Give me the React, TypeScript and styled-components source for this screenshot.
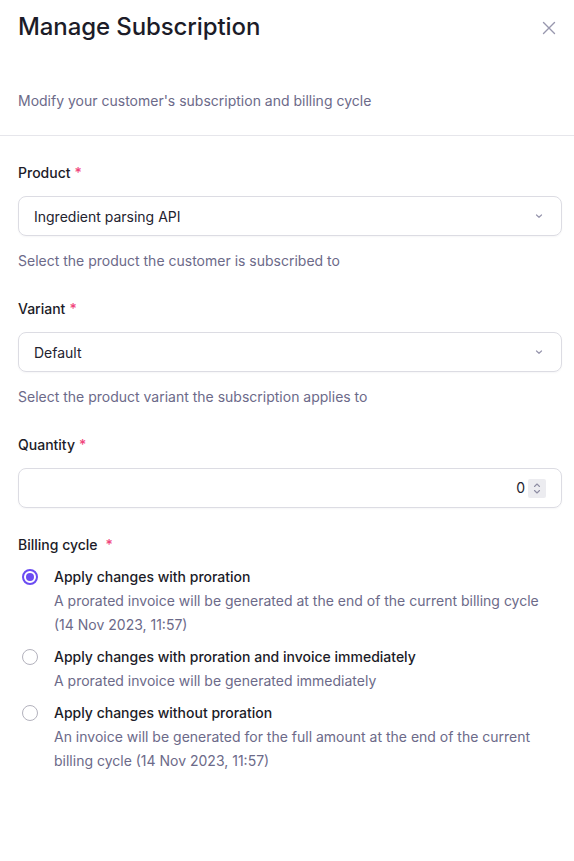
import React, { useState } from "react";
import styled, { createGlobalStyle } from "styled-components";

const Global = createGlobalStyle`
  html, body { margin: 0; padding: 0; background: #ffffff; }
  body { font-family: Inter, "Noto Sans", sans-serif; -webkit-font-smoothing: antialiased; }
  * { box-sizing: border-box; }
`;

const Panel = styled.div`
  width: 574px;
  min-height: 861px;
  background: #fff;
  display: flex;
  flex-direction: column;
`;

const Header = styled.header`
  padding: 12px 12px 24px 18px;
  border-bottom: 1px solid #e6e6eb;
  display: flex;
  flex-direction: column;
`;

const TitleRow = styled.div`
  display: flex;
  align-items: center;
  justify-content: space-between;
  height: 30px;
`;

const Title = styled.h1`
  margin: 0;
  font-size: 24px;
  line-height: 30px;
  font-weight: 500;
  color: #1c1c28;
  letter-spacing: -0.1px;
`;

const CloseButton = styled.button`
  border: 0;
  background: transparent;
  padding: 0;
  margin: 2px 6px 0 0;
  width: 14px;
  height: 14px;
  display: flex;
  align-items: center;
  justify-content: center;
  cursor: pointer;
  color: #9897ae;
`;

const Description = styled.p`
  margin: 49px 0 0 0;
  font-size: 14px;
  line-height: 20px;
  color: #6c6a89;
`;

const Body = styled.div`
  padding: 27px 12px 0 18px;
  display: flex;
  flex-direction: column;
`;

const Field = styled.div<{ $gap?: number }>`
  display: flex;
  flex-direction: column;
  margin-bottom: ${(p) => p.$gap ?? 28}px;
`;

const Label = styled.label`
  font-size: 14px;
  line-height: 20px;
  font-weight: 500;
  color: #1c1c28;
  margin-bottom: 13px;
`;

const Required = styled.span<{ $space?: boolean }>`
  color: #f0457c;
  margin-left: ${(p) => (p.$space ? 8 : 4)}px;
`;

const SelectBox = styled.div`
  height: 40px;
  border: 1px solid #dcdce3;
  border-radius: 8px;
  display: flex;
  align-items: center;
  justify-content: space-between;
  padding: 0 17px 0 15px;
  font-size: 14px;
  color: #23232f;
  box-shadow: 0 1px 2px rgba(20, 20, 40, 0.04);
`;

const Chevron = styled.svg`
  width: 10px;
  height: 10px;
  color: #9897ae;
`;

const Help = styled.div`
  margin-top: 15px;
  font-size: 14px;
  line-height: 20px;
  color: #6c6a89;
`;

const NumberBox = styled.div`
  height: 40px;
  border: 1px solid #dcdce3;
  border-radius: 8px;
  padding: 0 15px 0 16px;
  display: flex;
  align-items: center;
  box-shadow: 0 1px 2px rgba(20, 20, 40, 0.04);
`;

const NumberInput = styled.input`
  flex: 1;
  min-width: 0;
  border: 0;
  padding: 0;
  margin: 0 3px 0 0;
  background: transparent;
  font-family: inherit;
  font-size: 14px;
  line-height: 20px;
  color: #23232f;
  text-align: right;
  outline: none;
  -moz-appearance: textfield;
  &::-webkit-inner-spin-button,
  &::-webkit-outer-spin-button {
    -webkit-appearance: none;
    margin: 0;
  }
`;

const Spinner = styled.div`
  width: 18px;
  height: 19px;
  background: #ececf0;
  border-radius: 2px;
  display: flex;
  align-items: center;
  justify-content: center;
  color: #8e8da3;
`;

const RadioList = styled.div`
  display: flex;
  flex-direction: column;
  gap: 8px;
  margin-top: -3px;
`;

const Option = styled.label`
  display: grid;
  grid-template-columns: 24px 1fr;
  column-gap: 12px;
  cursor: pointer;
`;

const RadioCircle = styled.span<{ $checked: boolean }>`
  width: 16px;
  height: 16px;
  margin: 4px 0 0 4px;
  border-radius: 50%;
  border: ${(p) => (p.$checked ? "2px solid #6b4cf2" : "1.5px solid #b3b2bd")};
  display: flex;
  align-items: center;
  justify-content: center;
  background: #fff;
  &::after {
    content: "";
    display: ${(p) => (p.$checked ? "block" : "none")};
    width: 8px;
    height: 8px;
    border-radius: 50%;
    background: #6b4cf2;
  }
`;

const OptionText = styled.div`
  display: flex;
  flex-direction: column;
`;

const OptionTitle = styled.div`
  font-size: 14px;
  line-height: 24px;
  font-weight: 500;
  color: #1c1c28;
`;

const OptionDesc = styled.div`
  font-size: 14px;
  line-height: 24px;
  color: #6c6a89;
`;

const ChevronIcon = () => (
  <Chevron viewBox="0 0 10 10" fill="none">
    <path d="M2.5 4 L5 6.3 L7.5 4" stroke="currentColor" strokeWidth="1.2" strokeLinecap="round" strokeLinejoin="round" />
  </Chevron>
);

const options = [
  {
    title: "Apply changes with proration",
    desc: "A prorated invoice will be generated at the end of the current billing cycle (14 Nov 2023, 11:57)",
  },
  {
    title: "Apply changes with proration and invoice immediately",
    desc: "A prorated invoice will be generated immediately",
  },
  {
    title: "Apply changes without proration",
    desc: "An invoice will be generated for the full amount at the end of the current billing cycle (14 Nov 2023, 11:57)",
  },
];

export default function App() {
  const [selected, setSelected] = useState(0);
  return (
    <>
      <Global />
      <Panel>
        <Header>
          <TitleRow>
            <Title>Manage Subscription</Title>
            <CloseButton aria-label="Close">
              <svg width="14" height="14" viewBox="0 0 14 14" fill="none">
                <path d="M1.5 1.5 L12.5 12.5 M12.5 1.5 L1.5 12.5" stroke="currentColor" strokeWidth="1.4" strokeLinecap="round" />
              </svg>
            </CloseButton>
          </TitleRow>
          <Description>Modify your customer's subscription and billing cycle</Description>
        </Header>
        <Body>
          <Field>
            <Label>
              Product<Required>*</Required>
            </Label>
            <SelectBox>
              <span>Ingredient parsing API</span>
              <ChevronIcon />
            </SelectBox>
            <Help>Select the product the customer is subscribed to</Help>
          </Field>
          <Field>
            <Label>
              Variant<Required>*</Required>
            </Label>
            <SelectBox>
              <span>Default</span>
              <ChevronIcon />
            </SelectBox>
            <Help>Select the product variant the subscription applies to</Help>
          </Field>
          <Field $gap={27}>
            <Label>
              Quantity<Required>*</Required>
            </Label>
            <NumberBox>
              <NumberInput type="number" defaultValue={0} />
              <Spinner>
                <svg width="10" height="15" viewBox="0 0 10 15" fill="none">
                  <path d="M2.5 5.5 L5 3 L7.5 5.5 M2.5 9.5 L5 12 L7.5 9.5" stroke="currentColor" strokeWidth="1.1" strokeLinecap="round" strokeLinejoin="round" />
                </svg>
              </Spinner>
            </NumberBox>
          </Field>
          <Field $gap={0}>
            <Label>
              Billing cycle<Required $space>*</Required>
            </Label>
            <RadioList>
              {options.map((o, i) => (
                <Option key={i} onClick={() => setSelected(i)}>
                  <RadioCircle $checked={selected === i} />
                  <OptionText>
                    <OptionTitle>{o.title}</OptionTitle>
                    <OptionDesc>{o.desc}</OptionDesc>
                  </OptionText>
                </Option>
              ))}
            </RadioList>
          </Field>
        </Body>
      </Panel>
    </>
  );
}
